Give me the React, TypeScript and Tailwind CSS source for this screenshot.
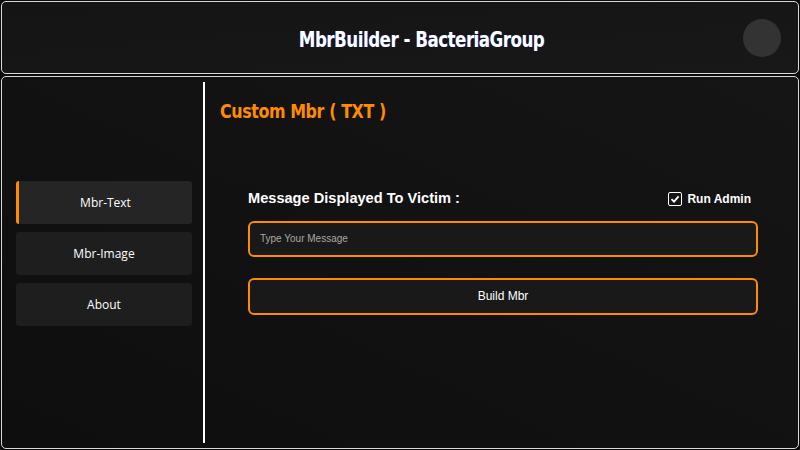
import React, { useState } from "react";

const tabs = ["Mbr-Text", "Mbr-Image", "About"];

export default function App() {
  const [active, setActive] = useState("Mbr-Text");
  const [runAdmin, setRunAdmin] = useState(true);
  const [message, setMessage] = useState("");

  return (
    <div className="w-[800px] h-[450px] bg-[#0b0b0b] flex flex-col gap-[2px] p-px font-['Liberation_Sans',sans-serif]">
      <header className="h-[73px] shrink-0 rounded-[5px] border border-[#d8d8d8] bg-gradient-to-br from-[#141414] to-[#181818] flex items-center justify-center relative">
        <h1 className="ml-[43px] mt-[3px] text-white text-[22px] font-bold tracking-[-0.6px] [transform:scaleX(0.755)] font-['DejaVu_Sans',sans-serif] [text-shadow:1px_0_0_#2233aa]">
          MbrBuilder - BacteriaGroup
        </h1>
        <div className="absolute right-[17px] top-[17px] w-[38px] h-[38px] rounded-full bg-[#333333]" />
      </header>

      <div className="flex-1 rounded-[5px] border border-[#d8d8d8] bg-gradient-to-tr from-[#0e0e0e] to-[#151515] flex">
        <aside className="w-[203px] shrink-0 flex flex-col justify-center gap-2 pl-[14px] pr-[11px] pb-[18px] border-r-2 border-white my-[5px]">
          {tabs.map((t) => (
            <button
              key={t}
              onClick={() => setActive(t)}
              className={
                active === t
                  ? "h-[43px] rounded-[3px] bg-[#252525] border-l-[3px] border-[#ff8c00] text-white text-[12px] font-['Open_Sans',sans-serif]"
                  : "h-[43px] rounded-[3px] bg-[#1e1e1e] text-white text-[12px] font-['Open_Sans',sans-serif]"
              }
            >
              {t}
            </button>
          ))}
        </aside>

        <main className="flex-1 flex flex-col pl-[15px] pr-[40px] pt-[19px]">
          <h2 className="self-start origin-left [transform:scaleX(0.794)] text-[#ff8c00] text-[20px] font-bold tracking-[-0.5px] font-['DejaVu_Sans',sans-serif]">
            Custom Mbr ( TXT )
          </h2>

          <div className="pl-[28px] mt-[62px] flex flex-col">
            <div className="flex items-center justify-between pr-[7px]">
              <span className="text-white text-[14.6px] font-bold">Message Displayed To Victim :</span>
              <label className="flex items-center gap-[5px] text-white text-[12px] font-bold cursor-pointer">
                <span
                  onClick={() => setRunAdmin(!runAdmin)}
                  className="w-[14px] h-[14px] rounded-[2px] border border-white flex items-center justify-center"
                >
                  {runAdmin && (
                    <svg width="10" height="10" viewBox="0 0 10 10">
                      <path d="M1.5 5.2 L4 7.6 L8.6 2.4" stroke="white" strokeWidth="1.8" fill="none" />
                    </svg>
                  )}
                </span>
                Run Admin
              </label>
            </div>

            <input
              value={message}
              onChange={(e) => setMessage(e.target.value)}
              placeholder="Type Your Message"
              className="mt-[11px] h-[36px] rounded-[6px] border-2 border-[#ff8c00] bg-[#191919] px-[10px] text-[10px] text-white placeholder:text-[#a8a8a8] outline-none"
            />

            <button className="mt-[21px] h-[37px] rounded-[6px] border-2 border-[#ff8c00] bg-[#191919] text-white text-[12px]">
              Build Mbr
            </button>
          </div>
        </main>
      </div>
    </div>
  );
}
